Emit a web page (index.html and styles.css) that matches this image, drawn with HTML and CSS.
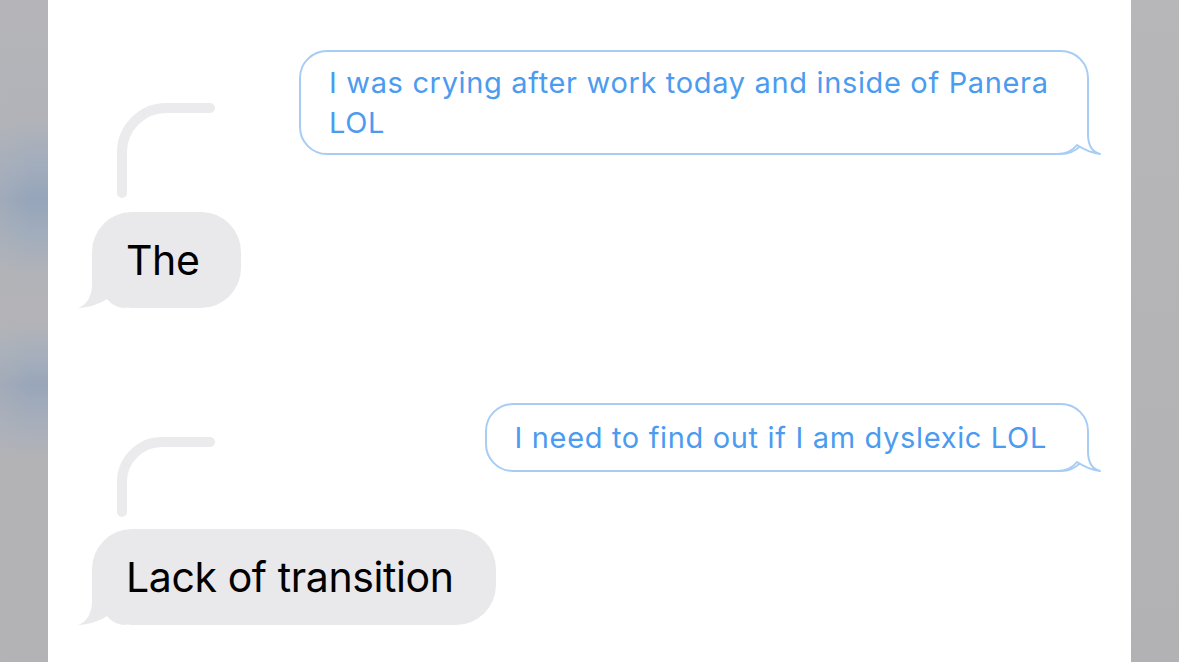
FILE: index.html
```html
<!DOCTYPE html>
<html lang="en">
<head>
<meta charset="utf-8">
<title>Messages</title>
<link rel="stylesheet" href="styles.css">
</head>
<body>
  <div class="edge edge-left"></div>
  <main class="panel">
    <div class="row row-out">
      <div class="bubble-out bubble-wrapped">
        <svg class="tail-out" width="54" height="44" viewBox="-40 -42 54 44" aria-hidden="true">
          <path class="tail-out-fill" d="M -1 -40 L -1 -21 C -1 -10 3 -3 11 -1 C 4 -2 -6 -6 -12 -10 C -16 -5 -22 -1 -32 -1 L -34 -1 L -34 -40 Z"/>
          <path class="tail-out-line" d="M -1 -40 L -1 -21 C -1 -10 3 -3 11 -1 C 4 -2 -6 -6 -12 -10 C -16 -5 -22 -1 -32 -1 L -34 -1"/>
        </svg>
        <p class="text-out">I was crying after work today and inside of Panera LOL</p>
      </div>
    </div>

    <div class="row row-in row-gap-sm">
      <div class="bubble-in">
        <svg class="thread" width="110" height="100" viewBox="0 0 110 100" aria-hidden="true">
          <path d="M 10 93 L 10 52 C 10 28 30 8 54 8 L 98 8"/>
        </svg>
        <svg class="tail-in" width="52" height="46" viewBox="-16 -46 52 46" aria-hidden="true">
          <path d="M 0 -46 L 0 -24 C 0 -12 -5 -3 -14 0 C -5 0 8 -4 15 -9 C 20 -3 26 0 34 0 L 34 -46 Z"/>
        </svg>
        <p class="text-in">The</p>
      </div>
    </div>

    <div class="row row-out row-gap-lg">
      <div class="bubble-out">
        <svg class="tail-out" width="54" height="44" viewBox="-40 -42 54 44" aria-hidden="true">
          <path class="tail-out-fill" d="M -1 -40 L -1 -21 C -1 -10 3 -3 11 -1 C 4 -2 -6 -6 -12 -10 C -16 -5 -22 -1 -32 -1 L -34 -1 L -34 -40 Z"/>
          <path class="tail-out-line" d="M -1 -40 L -1 -21 C -1 -10 3 -3 11 -1 C 4 -2 -6 -6 -12 -10 C -16 -5 -22 -1 -32 -1 L -34 -1"/>
        </svg>
        <p class="text-out">I need to find out if I am dyslexic LOL</p>
      </div>
    </div>

    <div class="row row-in row-gap-sm">
      <div class="bubble-in">
        <svg class="thread" width="110" height="82" viewBox="0 0 110 82" aria-hidden="true">
          <path d="M 10 77 L 10 47 C 10 25 28 7 50 7 L 98 7"/>
        </svg>
        <svg class="tail-in" width="52" height="46" viewBox="-16 -46 52 46" aria-hidden="true">
          <path d="M 0 -46 L 0 -24 C 0 -12 -5 -3 -14 0 C -5 0 8 -4 15 -9 C 20 -3 26 0 34 0 L 34 -46 Z"/>
        </svg>
        <p class="text-in">Lack of transition</p>
      </div>
    </div>
  </main>
  <div class="edge edge-right"></div>
</body>
</html>
```

FILE: styles.css
```css
* {
  box-sizing: border-box;
}

html, body {
  margin: 0;
  padding: 0;
  height: 100%;
}

body {
  display: flex;
  width: 1179px;
  height: 662px;
  overflow: hidden;
  background: #ffffff;
  font-family: Inter, "Liberation Sans", Arial, sans-serif;
}

.edge {
  flex: 0 0 48px;
  height: 100%;
}

.edge-left {
  background:
    linear-gradient(90deg, rgba(180,180,184,0.35) 0%, rgba(180,180,184,0) 60%),
    linear-gradient(180deg,
      #b5b5b8 0px,
      #b1b3b8 120px,
      #a2adbd 165px,
      #96a5ba 200px,
      #a2adbc 235px,
      #b2b3b7 275px,
      #b4b4b7 320px,
      #a6afbc 355px,
      #99a6b9 385px,
      #a6aebb 420px,
      #b3b3b6 460px,
      #b3b3b5 662px);
}

.edge-right {
  background: linear-gradient(180deg, #b7b7b9 0%, #b4b4b6 50%, #b2b2b4 100%);
}

.panel {
  flex: 1 1 auto;
  height: 100%;
  background: #ffffff;
  padding: 50px 42px 0 44px;
  display: flex;
  flex-direction: column;
}

.row {
  display: flex;
}

.row-out {
  justify-content: flex-end;
}

.row-in {
  justify-content: flex-start;
}

.row-gap-sm {
  margin-top: 57px;
}

.row-gap-lg {
  margin-top: 95px;
}

.bubble-out {
  position: relative;
  display: flex;
  align-items: center;
  max-width: 790px;
  min-height: 69px;
  padding: 11px 40px 10px 28px;
  border: 2px solid #a7cdf5;
  border-radius: 28px;
  background: #ffffff;
}

.bubble-wrapped {
  padding-right: 30px;
}

.text-out {
  position: relative;
  margin: 0;
  font-size: 29px;
  line-height: 40px;
  letter-spacing: 0.66px;
  color: #4b9bef;
}

.tail-out {
  position: absolute;
  right: -16px;
  bottom: -4px;
  overflow: visible;
}

.tail-out-fill {
  fill: #ffffff;
}

.tail-out-line {
  fill: none;
  stroke: #a7cdf5;
  stroke-width: 2;
  stroke-linejoin: round;
}

.bubble-in {
  position: relative;
  padding: 24px 42px 24px 34px;
  border-radius: 40px;
  background: #e9e9eb;
}

.text-in {
  position: relative;
  margin: 0;
  font-size: 41px;
  line-height: 48px;
  letter-spacing: -0.4px;
  color: #000000;
  white-space: nowrap;
}

.tail-in {
  position: absolute;
  left: -16px;
  bottom: 0;
}

.tail-in path {
  fill: #e9e9eb;
}

.thread {
  position: absolute;
  left: 20px;
  bottom: calc(100% + 12px);
  overflow: visible;
}

.thread path {
  fill: none;
  stroke: #ebebed;
  stroke-width: 10;
  stroke-linecap: round;
}
```
